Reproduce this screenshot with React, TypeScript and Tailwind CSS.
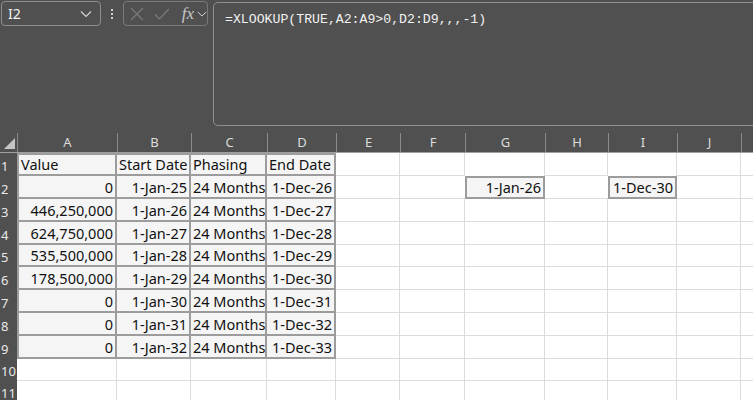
import React from "react";

const COLS = [
  { l: "A", w: 100 },
  { l: "B", w: 74 },
  { l: "C", w: 76 },
  { l: "D", w: 69 },
  { l: "E", w: 64 },
  { l: "F", w: 65 },
  { l: "G", w: 80 },
  { l: "H", w: 63 },
  { l: "I", w: 69 },
  { l: "J", w: 64 },
  { l: "", w: 60 },
];

const ROWH = [23, 23, 23, 23, 22, 23, 23, 23, 23, 22, 22];

type Cell = { t: string; align?: "l" | "r" };

const DATA: Record<string, Cell> = {
  "0-0": { t: "Value", align: "l" },
  "0-1": { t: "Start Date", align: "l" },
  "0-2": { t: "Phasing", align: "l" },
  "0-3": { t: "End Date", align: "l" },
  "1-6": { t: "1-Jan-26", align: "r" },
  "1-8": { t: "1-Dec-30", align: "r" },
};

const vals = ["0", "446,250,000", "624,750,000", "535,500,000", "178,500,000", "0", "0", "0"];
vals.forEach((v, i) => {
  const r = i + 1;
  DATA[`${r}-0`] = { t: v, align: "r" };
  DATA[`${r}-1`] = { t: `1-Jan-${25 + i}`, align: "r" };
  DATA[`${r}-2`] = { t: "24 Months", align: "l" };
  DATA[`${r}-3`] = { t: `1-Dec-${26 + i}`, align: "r" };
});

function inRange(r: number, c: number) {
  if (r <= 8 && c <= 3) return true;
  if (r === 1 && (c === 6 || c === 8)) return true;
  return false;
}

function GridCell({ r, c, w }: { r: number; c: number; w: number }) {
  const d = DATA[`${r}-${c}`];
  const ranged = inRange(r, c);
  const rightNeighborRanged = inRange(r, c + 1);
  const belowRanged = inRange(r + 1, c);
  let cls = "relative flex items-end pb-[1px] shrink-0 overflow-hidden whitespace-nowrap ";
  if (ranged) {
    cls += "bg-[#f5f5f5] border-[#9c9c9c] border-r-2 border-b-2 ";
    const leftRanged = c > 0 && inRange(r, c - 1);
    const topRanged = r > 0 && inRange(r - 1, c);
    if (!leftRanged) cls += "border-l-2 ";
    if (!topRanged) cls += "border-t-2 ";
  } else {
    cls += "bg-white border-[#dcdcdc] ";
    if (!rightNeighborRanged) cls += "border-r ";
    if (!belowRanged) cls += "border-b ";
  }
  if (d) cls += d.align === "r" ? "justify-end pr-[2px] " : "justify-start pl-[2px] ";
  return (
    <div className={cls} style={{ width: w }}>
      {d ? <span className="text-[14.5px] leading-[18px] text-[#111]">{d.t}</span> : null}
    </div>
  );
}

function ChevronDown({ className }: { className?: string }) {
  return (
    <svg width="12" height="8" viewBox="0 0 12 8" className={className}>
      <path d="M1 1.5 L6 6.5 L11 1.5" fill="none" stroke="#d4d4d4" strokeWidth="1.2" />
    </svg>
  );
}

export default function App() {
  return (
    <div
      className="w-[753px] h-[400px] overflow-hidden bg-white"
      style={{ fontFamily: '"Noto Sans", "Open Sans", sans-serif' }}
    >
      {/* Formula bar */}
      <div className="h-[133px] bg-[#505050] flex items-start">
        <div className="shrink-0 ml-[1px] mt-[1px] w-[100px] h-[25px] rounded-[4px] border border-[#8e8e8e] flex items-center pl-[6px] pr-[8px] justify-between">
          <span className="text-[14px] text-[#f2f2f2] leading-none">I2</span>
          <ChevronDown />
        </div>
        <div className="shrink-0 w-[22px] h-[27px] flex flex-col items-center justify-center gap-[2px]">
          <div className="w-[2px] h-[2px] bg-[#d0d0d0]" />
          <div className="w-[2px] h-[2px] bg-[#d0d0d0]" />
          <div className="w-[2px] h-[2px] bg-[#d0d0d0]" />
        </div>
        <div className="shrink-0 mt-[1px] w-[85px] h-[25px] rounded-[4px] border border-[#7a7a7a] flex items-center pl-[6px]">
          <svg width="14" height="14" viewBox="0 0 14 14">
            <path d="M1 1 L13 13 M13 1 L1 13" stroke="#7b7b7b" strokeWidth="1.2" fill="none" />
          </svg>
          <svg width="16" height="14" viewBox="0 0 16 14" className="ml-[10px]">
            <path d="M1 7.5 L5.5 12 L15 2" stroke="#7b7b7b" strokeWidth="1.2" fill="none" />
          </svg>
          <span
            className="ml-[12px] text-[17px] italic text-[#c8c8c8] leading-none"
            style={{ fontFamily: '"Liberation Serif", "DejaVu Serif", serif' }}
          >
            fx
          </span>
          <ChevronDown className="ml-[3px] w-[10px]" />
        </div>
        <div className="shrink-0 ml-[5px] mt-[2px] w-[600px] h-[124px] rounded-[5px] border border-[#8e8e8e] pl-[11px] pt-[2px]">
          <span
            className="text-[13.2px] text-[#f2f2f2] leading-[20px]"
            style={{ fontFamily: '"Liberation Mono", "DejaVu Sans Mono", monospace' }}
          >
            =XLOOKUP(TRUE,A2:A9&gt;0,D2:D9,,,-1)
          </span>
        </div>
      </div>

      {/* Column headers */}
      <div className="flex h-[20px] bg-[#505050] border-b border-[#a0a0a0]">
        <div className="w-[17px] shrink-0 relative">
          <svg width="12" height="12" viewBox="0 0 12 12" className="absolute left-[4px] top-[5px]">
            <path d="M11 0 L11 11 L0 11 Z" fill="#c4c4c4" />
          </svg>
        </div>
        {COLS.map((col, i) => (
          <div
            key={i}
            className="shrink-0 flex items-center justify-center border-l border-[#8a8a8a] text-[13px] text-[#dcdcdc]"
            style={{ width: col.w }}
          >
            {col.l}
          </div>
        ))}
      </div>

      {/* Rows */}
      {ROWH.map((h, r) => (
        <div key={r} className="flex" style={{ height: h }}>
          <div className="w-[17px] shrink-0 bg-[#505050] flex items-end pb-[1px] pl-[1px] text-[13px] leading-[18px] text-[#e8e8e8]">
            {r + 1}
          </div>
          {COLS.map((col, c) => (
            <GridCell key={c} r={r} c={c} w={col.w} />
          ))}
        </div>
      ))}
    </div>
  );
}
